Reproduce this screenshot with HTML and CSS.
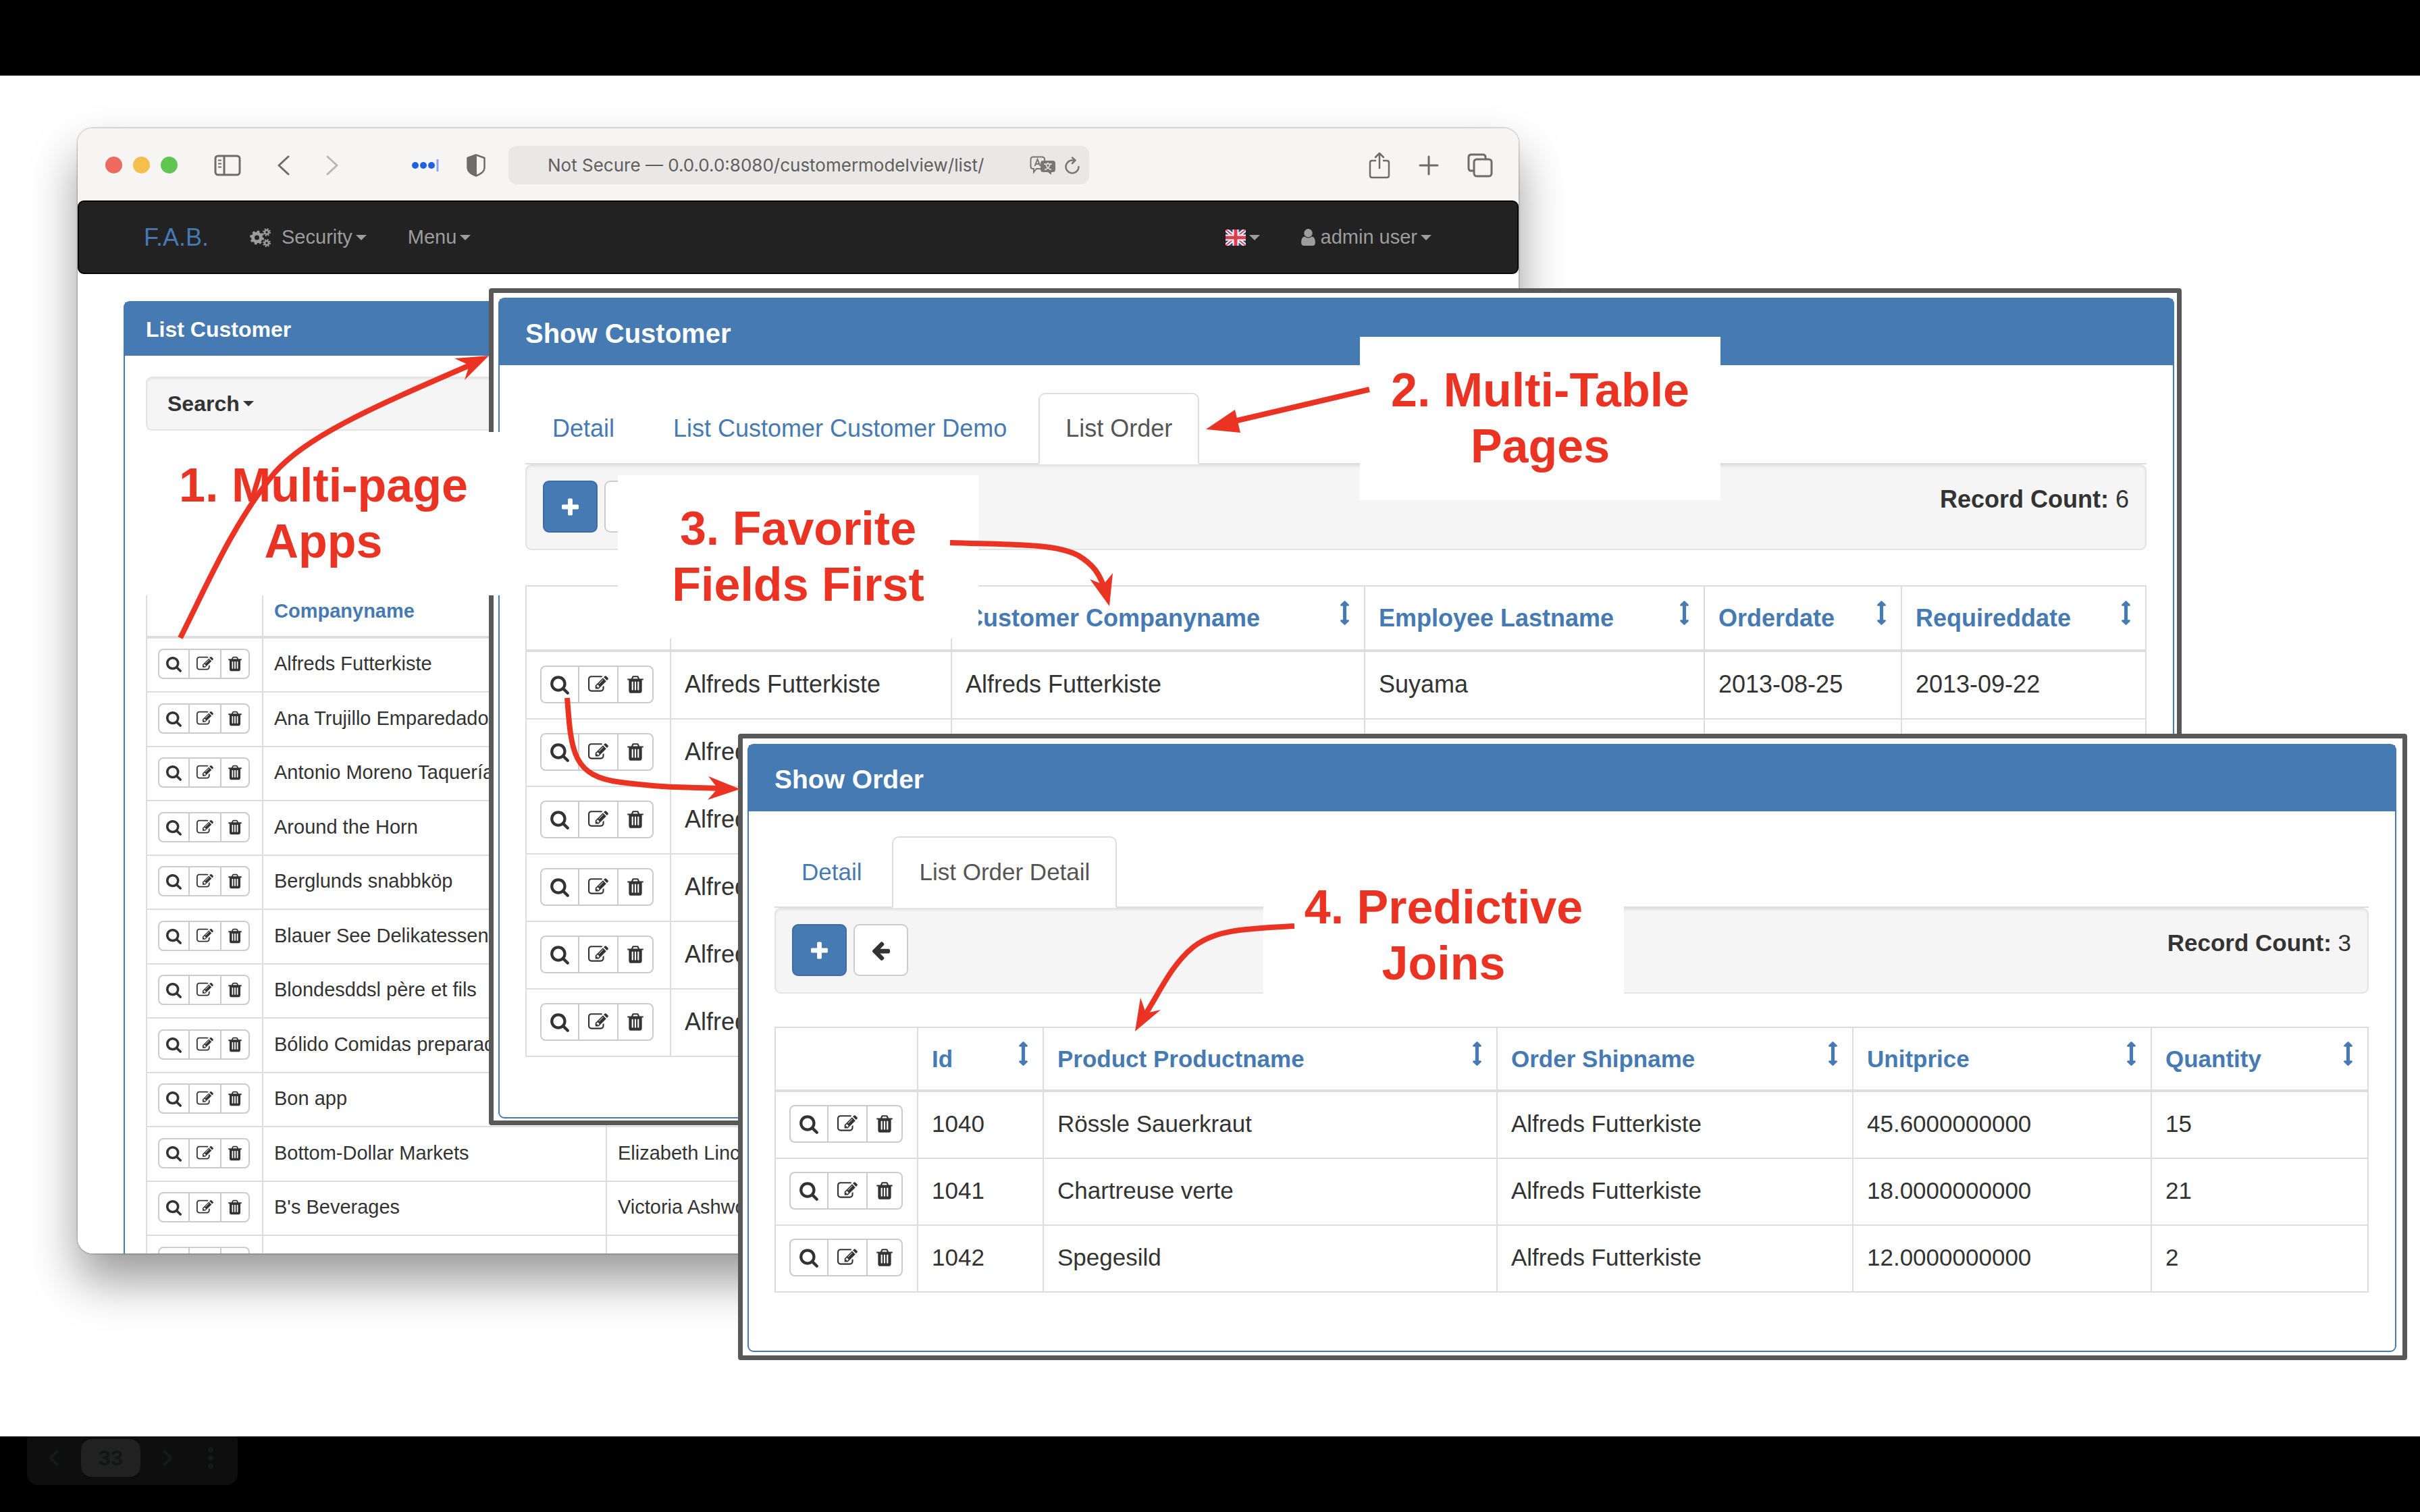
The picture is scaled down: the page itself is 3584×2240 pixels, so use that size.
FILE: index.html
```html
<!DOCTYPE html>
<html lang="en">
<head>
<meta charset="utf-8">
<title>Multi-page apps</title>
<link rel="stylesheet" href="styles.css">
</head>
<body>
<svg class="sprite" aria-hidden="true">
  <symbol id="search" viewBox="0 0 1664 1792"><path d="M1152 832q0-185-131.500-316.500t-316.500-131.500-316.500 131.500-131.500 316.500 131.500 316.500 316.500 131.500 316.500-131.500 131.500-316.500zm512 832q0 52-38 90t-90 38q-54 0-90-38l-343-342q-179 124-399 124-143 0-273.500-55.500t-225-150-150-225-55.500-273.500 55.500-273.500 150-225 225-150 273.500-55.500 273.500 55.500 225 150 150 225 55.500 273.500q0 220-124 399l343 343q37 37 37 90z"/></symbol>
  <symbol id="edit" viewBox="0 0 1792 1792"><path d="M888 1184l116-116-152-152-116 116v56h96v96h56zm440-720q-16-16-33 1l-350 350q-17 17-1 33t33-1l350-350q17-17 1-33zm80 594v190q0 119-84.500 203.500t-203.500 84.500h-832q-119 0-203.500-84.500t-84.500-203.500v-832q0-119 84.500-203.500t203.500-84.500h832q63 0 117 25 15 7 18 23 3 17-9 29l-49 49q-14 14-32 8-23-6-45-6h-832q-66 0-113 47t-47 113v832q0 66 47 113t113 47h832q66 0 113-47t47-113v-126q0-13 9-22l64-64q15-15 35-7t20 29zm-96-738l288 288-672 672h-288v-288zm444 132l-92 92-288-288 92-92q28-28 68-28t68 28l152 152q28 28 28 68t-28 68z"/></symbol>
  <symbol id="trash" viewBox="0 0 1408 1792"><path d="M512 1376v-704q0-14-9-23t-23-9h-64q-14 0-23 9t-9 23v704q0 14 9 23t23 9h64q14 0 23-9t9-23zm256 0v-704q0-14-9-23t-23-9h-64q-14 0-23 9t-9 23v704q0 14 9 23t23 9h64q14 0 23-9t9-23zm256 0v-704q0-14-9-23t-23-9h-64q-14 0-23 9t-9 23v704q0 14 9 23t23 9h64q14 0 23-9t9-23zm-544-992h448l-48-117q-7-9-17-11h-317q-10 2-17 11zm928 32v64q0 14-9 23t-23 9h-96v948q0 83-47 143.500t-113 60.500h-832q-66 0-113-58.500t-47-141.500v-952h-96q-14 0-23-9t-9-23v-64q0-14 9-23t23-9h309l70-167q15-37 54-63t79-26h320q40 0 79 26t54 63l70 167h309q14 0 23 9t9 23z"/></symbol>
  <symbol id="plus" viewBox="0 0 1408 1792"><path d="M1408 800v192q0 40-28 68t-68 28h-416v416q0 40-28 68t-68 28h-192q-40 0-68-28t-28-68v-416h-416q-40 0-68-28t-28-68v-192q0-40 28-68t68-28h416v-416q0-40 28-68t68-28h192q40 0 68 28t28 68v416h416q40 0 68 28t28 68z"/></symbol>
  <symbol id="back" viewBox="0 0 1472 1792"><path d="M1472 896v128q0 53-32.500 90.500t-84.500 37.500h-704l293 294q38 36 38 90t-38 90l-75 76q-37 37-90 37-52 0-91-37l-651-652q-37-37-37-90 0-52 37-91l651-650q38-38 91-38 52 0 90 38l75 74q38 38 38 91t-38 91l-293 293h704q52 0 84.500 37.500t32.500 90.500z"/></symbol>
  <symbol id="sort" viewBox="0 0 640 1792"><path d="M640 320q0 26-19 45t-45 19h-128v1024h128q26 0 45 19t19 45-19 45l-256 256q-19 19-45 19t-45-19l-256-256q-19-19-19-45t19-45 45-19h128v-1024h-128q-26 0-45-19t-19-45 19-45l256-256q19-19 45-19t45 19l256 256q19 19 19 45z"/></symbol>
  <symbol id="user" viewBox="0 0 1280 1792"><path d="M1280 1399q0 109-62.500 187t-150.500 78h-854q-88 0-150.500-78t-62.500-187q0-85 8.500-160.500t31.500-152 58.500-131 94-89 134.500-34.500q131 128 313 128t313-128q76 0 134.500 34.500t94 89 58.500 131 31.500 152 8.500 160.500zm-256-887q0 159-112.500 271.500t-271.500 112.500-271.500-112.500-112.500-271.500 112.500-271.500 271.500-112.500 271.500 112.500 112.500 271.500z"/></symbol>
</svg>

<main class="slide">

  <section class="browser">
    <div class="toolbar">
      <div class="lights"><i class="red"></i><i class="amber"></i><i class="green"></i></div>
      <button class="tool sidebar-tool" aria-label="Sidebar"><svg width="40" height="32" fill="none" stroke="#6d6c6a" stroke-width="3"><rect x="2" y="2" width="36" height="28" rx="4"/><path d="M15 2V30"/><path d="M6 8.500h5M6 13.500h5M6 18.500h5" stroke-width="2"/></svg></button>
      <button class="tool prev-tool" aria-label="Back"><svg width="18" height="30" fill="none" stroke="#6d6c6a" stroke-width="3" stroke-linecap="round" stroke-linejoin="round"><path d="M16 2L2 15L16 28"/></svg></button>
      <button class="tool next-tool" aria-label="Forward"><svg width="18" height="30" fill="none" stroke="#b9b8b6" stroke-width="3" stroke-linecap="round" stroke-linejoin="round"><path d="M2 2L16 15L2 28"/></svg></button>
      <button class="tool pass-tool" aria-label="Passwords"><svg width="40" height="20"><g fill="#2160e0"><circle cx="5" cy="10" r="5"/><circle cx="17" cy="10" r="5"/><circle cx="29" cy="10" r="5"/></g><path d="M38 1V19" stroke="#86a6ee" stroke-width="3"/></svg></button>
      <button class="tool shield-tool" aria-label="Privacy"><svg width="28" height="34"><path d="M14 1.500L26.500 6V21Q26 28 14 32.500Q2 28 1.500 21V6Z" fill="none" stroke="#6d6c6a" stroke-width="2.500" stroke-linejoin="round"/><path d="M15 1.500L1.500 6V21Q2 28 15 32.500Z" fill="#6d6c6a"/></svg></button>
      <div class="address">
        <input class="url" type="text" aria-label="Address" value="Not Secure — 0.0.0.0:8080/customermodelview/list/">
        <button class="tool" aria-label="Translate"><svg width="38" height="28"><path d="M5 1.500H18Q22 1.500 22 5V16Q22 19 18 19H10L6 24V19H5Q1.500 19 1.500 16V5Q1.500 1.500 5 1.500Z" fill="none" stroke="#777674" stroke-width="2"/><path d="M7.500 15L11.500 5L15.500 15M9 12H14" fill="none" stroke="#777674" stroke-width="2"/><path d="M20 7H34Q38 7 38 11V20Q38 24 34 24H32V28L27 24H20Q16 24 16 20V11Q16 7 20 7Z" fill="#777674"/><path d="M21 12H33M27 9.500V12M23.500 12Q26 19 32 20.500M30.500 12Q28 19 22 20.500" fill="none" stroke="#e9e8e6" stroke-width="1.500"/></svg></button>
        <button class="tool" aria-label="Reload"><svg width="22" height="26" fill="none" stroke="#777674" stroke-width="2.500" stroke-linecap="round" stroke-linejoin="round"><path d="M20.500 15A9.500 9.500 0 1 1 11 5.500H15"/><path d="M11 1.500L15.500 5.500L11 10"/></svg></button>
      </div>
      <button class="tool share-tool" aria-label="Share"><svg width="32" height="40" fill="none" stroke="#6d6c6a" stroke-width="2.500" stroke-linecap="round" stroke-linejoin="round"><path d="M10 13H5Q2 13 2 16V35Q2 38 5 38H27Q30 38 30 35V16Q30 13 27 13H22"/><path d="M16 24V2M10 8L16 2L22 8"/></svg></button>
      <button class="tool add-tool" aria-label="New tab"><svg width="30" height="30" stroke="#6d6c6a" stroke-width="3" stroke-linecap="round"><path d="M15 2V28M2 15H28"/></svg></button>
      <button class="tool tabs-tool" aria-label="Tabs"><svg width="38" height="36" fill="none" stroke="#6d6c6a" stroke-width="3"><path d="M10 26H6Q2 26 2 22V6Q2 2 6 2H23Q27 2 27 6V9"/><rect x="10" y="9" width="26" height="25" rx="4"/></svg></button>
    </div>

    <nav class="navbar">
      <a class="brand" href="#">F.A.B.</a>
      <a class="nav-link" href="#"><svg class="cogs" width="31" height="28" fill="none" stroke="#9d9d9d"><circle cx="10.500" cy="14" r="6" stroke-width="5"/><circle cx="10.500" cy="14" r="9" stroke-width="3" stroke-dasharray="3.500 3.570"/><circle cx="25" cy="6" r="3" stroke-width="2.500"/><circle cx="25" cy="6" r="5" stroke-width="2" stroke-dasharray="2 1.930"/><circle cx="25" cy="22" r="3" stroke-width="2.500"/><circle cx="25" cy="22" r="5" stroke-width="2" stroke-dasharray="2 1.930"/></svg>Security<i class="caret"></i></a>
      <a class="nav-link" href="#">Menu<i class="caret"></i></a>
      <a class="nav-link nav-right" href="#" aria-label="Language"><svg width="30" height="24" viewBox="0 0 30 24"><rect width="30" height="24" fill="#2b3990"/><path d="M0 0L30 24M30 0L0 24" stroke="#fff" stroke-width="6"/><path d="M0 0L30 24M30 0L0 24" stroke="#d8434c" stroke-width="2"/><path d="M15 0V24M0 12H30" stroke="#fff" stroke-width="9"/><path d="M15 0V24M0 12H30" stroke="#dc3f4a" stroke-width="5"/></svg><i class="caret"></i></a>
      <a class="nav-link" href="#"><svg class="user"><use href="#user"/></svg>admin user<i class="caret"></i></a>
    </nav>

    <article class="panel list-panel">
      <h2 class="panel-title">List Customer</h2>
      <div class="panel-body">
        <div class="well search-well"><button class="search-toggle">Search<i class="caret"></i></button></div>
        <table class="grid">
          <colgroup><col class="c-act"><col class="c-company"><col></colgroup>
          <thead><tr><th></th><th><a href="#">Companyname</a></th><th></th></tr></thead>
          <tbody>
            <tr><td><div class="acts"><button aria-label="Show"><svg class="i-search"><use href="#search"/></svg></button><button aria-label="Edit"><svg class="i-edit"><use href="#edit"/></svg></button><button aria-label="Delete"><svg class="i-trash"><use href="#trash"/></svg></button></div></td><td>Alfreds Futterkiste</td><td></td></tr>
            <tr><td><div class="acts"><button aria-label="Show"><svg class="i-search"><use href="#search"/></svg></button><button aria-label="Edit"><svg class="i-edit"><use href="#edit"/></svg></button><button aria-label="Delete"><svg class="i-trash"><use href="#trash"/></svg></button></div></td><td>Ana Trujillo Emparedados</td><td></td></tr>
            <tr><td><div class="acts"><button aria-label="Show"><svg class="i-search"><use href="#search"/></svg></button><button aria-label="Edit"><svg class="i-edit"><use href="#edit"/></svg></button><button aria-label="Delete"><svg class="i-trash"><use href="#trash"/></svg></button></div></td><td>Antonio Moreno Taquería</td><td></td></tr>
            <tr><td><div class="acts"><button aria-label="Show"><svg class="i-search"><use href="#search"/></svg></button><button aria-label="Edit"><svg class="i-edit"><use href="#edit"/></svg></button><button aria-label="Delete"><svg class="i-trash"><use href="#trash"/></svg></button></div></td><td>Around the Horn</td><td></td></tr>
            <tr><td><div class="acts"><button aria-label="Show"><svg class="i-search"><use href="#search"/></svg></button><button aria-label="Edit"><svg class="i-edit"><use href="#edit"/></svg></button><button aria-label="Delete"><svg class="i-trash"><use href="#trash"/></svg></button></div></td><td>Berglunds snabbköp</td><td></td></tr>
            <tr><td><div class="acts"><button aria-label="Show"><svg class="i-search"><use href="#search"/></svg></button><button aria-label="Edit"><svg class="i-edit"><use href="#edit"/></svg></button><button aria-label="Delete"><svg class="i-trash"><use href="#trash"/></svg></button></div></td><td>Blauer See Delikatessen</td><td></td></tr>
            <tr><td><div class="acts"><button aria-label="Show"><svg class="i-search"><use href="#search"/></svg></button><button aria-label="Edit"><svg class="i-edit"><use href="#edit"/></svg></button><button aria-label="Delete"><svg class="i-trash"><use href="#trash"/></svg></button></div></td><td>Blondesddsl père et fils</td><td></td></tr>
            <tr><td><div class="acts"><button aria-label="Show"><svg class="i-search"><use href="#search"/></svg></button><button aria-label="Edit"><svg class="i-edit"><use href="#edit"/></svg></button><button aria-label="Delete"><svg class="i-trash"><use href="#trash"/></svg></button></div></td><td>Bólido Comidas preparadas</td><td></td></tr>
            <tr><td><div class="acts"><button aria-label="Show"><svg class="i-search"><use href="#search"/></svg></button><button aria-label="Edit"><svg class="i-edit"><use href="#edit"/></svg></button><button aria-label="Delete"><svg class="i-trash"><use href="#trash"/></svg></button></div></td><td>Bon app</td><td></td></tr>
            <tr><td><div class="acts"><button aria-label="Show"><svg class="i-search"><use href="#search"/></svg></button><button aria-label="Edit"><svg class="i-edit"><use href="#edit"/></svg></button><button aria-label="Delete"><svg class="i-trash"><use href="#trash"/></svg></button></div></td><td>Bottom-Dollar Markets</td><td>Elizabeth Lincoln</td></tr>
            <tr><td><div class="acts"><button aria-label="Show"><svg class="i-search"><use href="#search"/></svg></button><button aria-label="Edit"><svg class="i-edit"><use href="#edit"/></svg></button><button aria-label="Delete"><svg class="i-trash"><use href="#trash"/></svg></button></div></td><td>B's Beverages</td><td>Victoria Ashworth</td></tr>
            <tr><td><div class="acts"><button aria-label="Show"><svg class="i-search"><use href="#search"/></svg></button><button aria-label="Edit"><svg class="i-edit"><use href="#edit"/></svg></button><button aria-label="Delete"><svg class="i-trash"><use href="#trash"/></svg></button></div></td><td></td><td></td></tr>
          </tbody>
        </table>
      </div>
    </article>
  </section>

  <section class="frame customer">
    <article class="panel">
      <h2 class="panel-title">Show Customer</h2>
      <div class="panel-body">
        <nav class="tabs"><a class="tab" href="#">Detail</a><a class="tab" href="#">List Customer Customer Demo</a><a class="tab active" href="#">List Order</a></nav>
        <div class="well bar"><button class="btn primary" aria-label="Add"><svg class="i-plus"><use href="#plus"/></svg></button><button class="btn" aria-label="Back"><svg class="i-back"><use href="#back"/></svg></button><p class="count"><b>Record Count:</b> 6</p></div>
        <table class="grid">
          <colgroup><col class="c-act"><col class="c-name"><col class="c-company"><col class="c-employee"><col class="c-date"><col></colgroup>
          <thead><tr>
            <th></th><th></th>
            <th><a class="sort" href="#">Customer Companyname<svg><use href="#sort"/></svg></a></th>
            <th><a class="sort" href="#">Employee Lastname<svg><use href="#sort"/></svg></a></th>
            <th><a class="sort" href="#">Orderdate<svg><use href="#sort"/></svg></a></th>
            <th><a class="sort" href="#">Requireddate<svg><use href="#sort"/></svg></a></th>
          </tr></thead>
          <tbody>
            <tr><td><div class="acts"><button aria-label="Show"><svg class="i-search"><use href="#search"/></svg></button><button aria-label="Edit"><svg class="i-edit"><use href="#edit"/></svg></button><button aria-label="Delete"><svg class="i-trash"><use href="#trash"/></svg></button></div></td><td>Alfreds Futterkiste</td><td>Alfreds Futterkiste</td><td>Suyama</td><td>2013-08-25</td><td>2013-09-22</td></tr>
            <tr><td><div class="acts"><button aria-label="Show"><svg class="i-search"><use href="#search"/></svg></button><button aria-label="Edit"><svg class="i-edit"><use href="#edit"/></svg></button><button aria-label="Delete"><svg class="i-trash"><use href="#trash"/></svg></button></div></td><td>Alfreds Futterkiste</td><td></td><td></td><td></td><td></td></tr>
            <tr><td><div class="acts"><button aria-label="Show"><svg class="i-search"><use href="#search"/></svg></button><button aria-label="Edit"><svg class="i-edit"><use href="#edit"/></svg></button><button aria-label="Delete"><svg class="i-trash"><use href="#trash"/></svg></button></div></td><td>Alfreds Futterkiste</td><td></td><td></td><td></td><td></td></tr>
            <tr><td><div class="acts"><button aria-label="Show"><svg class="i-search"><use href="#search"/></svg></button><button aria-label="Edit"><svg class="i-edit"><use href="#edit"/></svg></button><button aria-label="Delete"><svg class="i-trash"><use href="#trash"/></svg></button></div></td><td>Alfreds Futterkiste</td><td></td><td></td><td></td><td></td></tr>
            <tr><td><div class="acts"><button aria-label="Show"><svg class="i-search"><use href="#search"/></svg></button><button aria-label="Edit"><svg class="i-edit"><use href="#edit"/></svg></button><button aria-label="Delete"><svg class="i-trash"><use href="#trash"/></svg></button></div></td><td>Alfreds Futterkiste</td><td></td><td></td><td></td><td></td></tr>
            <tr><td><div class="acts"><button aria-label="Show"><svg class="i-search"><use href="#search"/></svg></button><button aria-label="Edit"><svg class="i-edit"><use href="#edit"/></svg></button><button aria-label="Delete"><svg class="i-trash"><use href="#trash"/></svg></button></div></td><td>Alfreds Futterkiste</td><td></td><td></td><td></td><td></td></tr>
          </tbody>
        </table>
      </div>
    </article>
  </section>

  <section class="frame order">
    <article class="panel">
      <h2 class="panel-title">Show Order</h2>
      <div class="panel-body">
        <nav class="tabs"><a class="tab" href="#">Detail</a><a class="tab active" href="#">List Order Detail</a></nav>
        <div class="well bar"><button class="btn primary" aria-label="Add"><svg class="i-plus"><use href="#plus"/></svg></button><button class="btn" aria-label="Back"><svg class="i-back"><use href="#back"/></svg></button><p class="count"><b>Record Count:</b> 3</p></div>
        <table class="grid">
          <colgroup><col class="c-act"><col class="c-id"><col class="c-product"><col class="c-ship"><col class="c-price"><col></colgroup>
          <thead><tr>
            <th></th>
            <th><a class="sort" href="#">Id<svg><use href="#sort"/></svg></a></th>
            <th><a class="sort" href="#">Product Productname<svg><use href="#sort"/></svg></a></th>
            <th><a class="sort" href="#">Order Shipname<svg><use href="#sort"/></svg></a></th>
            <th><a class="sort" href="#">Unitprice<svg><use href="#sort"/></svg></a></th>
            <th><a class="sort" href="#">Quantity<svg><use href="#sort"/></svg></a></th>
          </tr></thead>
          <tbody>
            <tr><td><div class="acts"><button aria-label="Show"><svg class="i-search"><use href="#search"/></svg></button><button aria-label="Edit"><svg class="i-edit"><use href="#edit"/></svg></button><button aria-label="Delete"><svg class="i-trash"><use href="#trash"/></svg></button></div></td><td>1040</td><td>Rössle Sauerkraut</td><td>Alfreds Futterkiste</td><td>45.6000000000</td><td>15</td></tr>
            <tr><td><div class="acts"><button aria-label="Show"><svg class="i-search"><use href="#search"/></svg></button><button aria-label="Edit"><svg class="i-edit"><use href="#edit"/></svg></button><button aria-label="Delete"><svg class="i-trash"><use href="#trash"/></svg></button></div></td><td>1041</td><td>Chartreuse verte</td><td>Alfreds Futterkiste</td><td>18.0000000000</td><td>21</td></tr>
            <tr><td><div class="acts"><button aria-label="Show"><svg class="i-search"><use href="#search"/></svg></button><button aria-label="Edit"><svg class="i-edit"><use href="#edit"/></svg></button><button aria-label="Delete"><svg class="i-trash"><use href="#trash"/></svg></button></div></td><td>1042</td><td>Spegesild</td><td>Alfreds Futterkiste</td><td>12.0000000000</td><td>2</td></tr>
          </tbody>
        </table>
      </div>
    </article>
  </section>

  <p class="note note-1">1. Multi-page<br>Apps</p>
  <p class="note note-2">2. Multi-Table<br>Pages</p>
  <p class="note note-3">3. Favorite<br>Fields First</p>
  <p class="note note-4">4. Predictive<br>Joins</p>

  <svg class="arrows" aria-hidden="true">
    <g transform="translate(0 -112)">
      <g fill="none" stroke="#ea3323" stroke-width="8">
        <path d="M267 945C305 870 345 775 407 700C455 645 560 600 696 541"/>
        <path d="M840 1034C846 1115 848 1150 920 1159S1020 1166 1066 1168"/>
        <path d="M2028 577L1828 624"/>
        <path d="M1407 804C1500 807 1565 805 1597 823C1620 837 1628 850 1636 872"/>
        <path d="M1917 1372C1840 1376 1797 1378 1766 1404S1720 1465 1695 1505"/>
      </g>
      <g fill="#ea3323">
        <path d="M724 527L673 531L695 541L688 563Z"/>
        <path d="M1096 1169L1049 1150L1063 1168L1048 1185Z"/>
        <path d="M1786 636L1829 607L1837 641Z"/>
        <path d="M1643 898L1614 858L1634 866L1648 849Z"/>
        <path d="M1681 1528L1689 1478L1697 1501L1719 1496Z"/>
      </g>
    </g>
  </svg>

  <div class="presenter">
    <button aria-label="Previous slide"><svg width="16" height="24" fill="none" stroke="#161919" stroke-width="4"><path d="M14 1L3 12L14 23"/></svg></button>
    <button class="page-no">33</button>
    <button aria-label="Next slide"><svg width="16" height="24" fill="none" stroke="#161919" stroke-width="4"><path d="M2 1L13 12L2 23"/></svg></button>
    <button aria-label="More"><svg width="8" height="32" fill="#161919"><circle cx="4" cy="4" r="4"/><circle cx="4" cy="16" r="4"/><circle cx="4" cy="28" r="4"/></svg></button>
  </div>
</main>
</body>
</html>
```
FILE: styles.css
```css
* { box-sizing: border-box; }

body {
  margin: 0;
  padding: 112px 0;
  background: #000;
  font-family: "Liberation Sans", Arial, sans-serif;
  color: #333;
}

button, input {
  margin: 0;
  padding: 0;
  border: 0;
  background: none;
  font: inherit;
  color: inherit;
}

a { color: #467ab3; text-decoration: none; }
svg { display: block; flex: none; }
.sprite { position: absolute; width: 0; height: 0; }

.slide {
  position: relative;
  min-height: calc(100vh - 224px);
  background: #fff;
}

/* Browser window */
.browser {
  --text: 29px;
  --title: 32px;
  --icon: 25px;
  --cell-pad: 16px;
  --act-pad: 10px;
  --act-height: 45px;
  position: absolute;
  left: 115px;
  top: 78px;
  width: 2134px;
  height: 1667px;
  overflow: hidden;
  border-radius: 22px;
  background: #fff;
}

.slide::before {
  content: "";
  position: absolute;
  left: 115px;
  top: 78px;
  width: 2134px;
  height: 1667px;
  border-radius: 22px;
  box-shadow: 0 0 2px 1px rgba(0, 0, 0, .25), 0 40px 70px rgba(0, 0, 0, .4);
}

.toolbar {
  display: flex;
  align-items: center;
  height: 107px;
  padding: 2px 38px 0 41px;
  background: #f6f5f3;
}

.lights { display: flex; gap: 16px; }
.lights i { width: 25px; height: 25px; border-radius: 50%; }
.red { background: #ec6a5e; }
.amber { background: #f4bf4f; }
.green { background: #61c554; }

.sidebar-tool { margin-left: 54px; }
.prev-tool { margin-left: 54px; }
.next-tool { margin-left: 54px; }
.pass-tool { margin-left: 109px; }
.shield-tool { margin-left: 41px; }

.address {
  display: flex;
  align-items: center;
  gap: 14px;
  width: 860px;
  height: 57px;
  margin-left: 34px;
  padding: 0 14px 0 58px;
  border-radius: 12px;
  background: #e9e8e6;
}

.url {
  flex: 1;
  min-width: 0;
  font-family: Inter, sans-serif;
  font-size: 26px;
  line-height: 40px;
  color: #5f5e5c;
}

.share-tool { margin-left: auto; }
.add-tool { margin-left: 42px; }
.tabs-tool { margin-left: 42px; }

.navbar {
  display: flex;
  align-items: center;
  gap: 61px;
  height: 109px;
  padding: 0 127px 0 96px;
  border: 2px solid #080808;
  border-radius: 9px;
  background: #222;
  font-size: var(--text);
}

.brand { font-size: 36px; }
.nav-link { display: flex; align-items: center; color: #9d9d9d; }
.nav-right { margin-left: auto; }
.cogs { margin-right: 16px; }
.user { width: 21px; height: 29px; margin-right: 8px; fill: #9d9d9d; }

.caret {
  margin-left: 5px;
  border: 8px solid transparent;
  border-top-color: currentColor;
  border-bottom: 0;
}

/* Panels */
.panel {
  border: 2px solid #467ab3;
  border-radius: 9px;
  background: #fff;
}

.panel-title {
  display: flex;
  align-items: center;
  margin: 0;
  padding-top: 4px;
  background: #467ab3;
  color: #fff;
  font-size: var(--title);
}

.well {
  border: 2px solid #e3e3e3;
  border-radius: 9px;
  background: #f5f5f5;
  box-shadow: inset 0 2px 3px rgba(0, 0, 0, .05);
}

.list-panel { margin: 40px 68px 0; }
.list-panel .panel-title { height: 79px; padding: 2px 0 0 31px; }
.list-panel .panel-body { padding: 31px; }
.search-well { display: flex; height: 80px; padding-left: 30px; }
.search-toggle { display: flex; align-items: center; font-size: var(--title); font-weight: bold; }

.frame {
  --text: 36px;
  --icon: 30px;
  --cell-pad: 20px;
  --act-pad: 13px;
  --act-height: 56px;
  position: absolute;
  border: 7px solid #595959;
  border-radius: 4px;
  background: #fff;
}

.frame .panel { height: 100%; }

.customer {
  --title: 40px;
  --tab: 36px;
  --tab-gap: 7px;
  --body-top: 41px;
  left: 724px;
  top: 315px;
  width: 2507px;
  height: 1240px;
  padding: 7px 4px 3px 7px;
}

.order {
  --text: 35px;
  --title: 39px;
  --tab: 35px;
  --tab-gap: 5px;
  --body-top: 37px;
  left: 1093px;
  top: 975px;
  width: 2472px;
  height: 928px;
  padding: 8px 9px 5px 7px;
}

.frame .panel-title { height: 98px; padding-left: 38px; }
.frame .panel-body { padding: var(--body-top) 39px 0 38px; }

.tabs {
  display: flex;
  gap: var(--tab-gap);
  height: 106px;
  border-bottom: 2px solid #ddd;
  font-size: var(--tab);
}

.tab {
  display: flex;
  align-items: center;
  height: 106px;
  padding: 0 38px;
  border: 2px solid transparent;
  border-radius: 10px 10px 0 0;
}

.tab.active {
  border-color: #ddd #ddd #fff;
  background: #fff;
  color: #555;
}

.bar {
  display: flex;
  gap: 10px;
  height: 127px;
  padding: 22px 24px;
}

.btn {
  display: flex;
  align-items: center;
  justify-content: center;
  width: 81px;
  height: 77px;
  border: 2px solid #ccc;
  border-radius: 9px;
  background: #fff;
}

.btn svg { height: 32px; fill: #333; }
.primary { border-color: #3e6da4; background: #467ab3; }
.primary svg { fill: #fff; }
.i-plus { width: 25px; }
.i-back { width: 26px; }

.count {
  margin: 2px 0 0 auto;
  font-size: var(--text);
  line-height: 52px;
}

/* Data tables */
.grid {
  width: 100%;
  table-layout: fixed;
  border-collapse: separate;
  border-spacing: 0;
  border: solid #ddd;
  border-width: 2px 0 0 2px;
  font-size: var(--text);
}

.grid th, .grid td {
  padding: 0 0 3px var(--cell-pad);
  border: solid #ddd;
  border-width: 0 2px 2px 0;
  text-align: left;
  vertical-align: middle;
  white-space: nowrap;
}

.grid th { padding-bottom: 0; border-bottom-width: 4px; }

.sort {
  display: flex;
  align-items: flex-start;
  justify-content: space-between;
  padding-right: 22px;
  line-height: 52px;
}

.sort svg { width: 13px; height: 36px; fill: #467ab3; }

.list-panel .grid { margin-top: 229px; }
.list-panel .c-act { width: 172px; }
.list-panel .c-company { width: 509px; }
.list-panel th { height: 77px; }
.list-panel td { height: 80px; }
.list-panel tr:nth-child(even) td { height: 81px; }

.customer .grid { margin-top: 52px; }
.customer .c-act { width: 214px; }
.customer .c-name { width: 416px; }
.customer .c-company { width: 612px; }
.customer .c-employee { width: 503px; }
.customer .c-date { width: 292px; }
.customer th { height: 97px; }
.customer td { height: 100px; }

.order .grid { margin-top: 49px; }
.order .c-act { width: 211px; }
.order .c-id { width: 186px; }
.order .c-product { width: 672px; }
.order .c-ship { width: 527px; }
.order .c-price { width: 442px; }
.order th { height: 95px; }
.order td { height: 99px; }

.acts { display: flex; }

.acts button {
  display: flex;
  align-items: center;
  height: var(--act-height);
  padding: 0 var(--act-pad);
  border: 2px solid #ccc;
  background: #fff;
}

.acts button + button { margin-left: -2px; }
.acts button:first-child { border-radius: 8px 0 0 8px; }
.acts button:last-child { border-radius: 0 8px 8px 0; }
.acts svg { height: var(--icon); fill: #333; }
.i-search { width: 28px; }
.i-edit { width: 30px; }
.i-trash { width: 24px; }
.browser .i-search { width: 23px; }
.browser .i-edit { width: 25px; }
.browser .i-trash { width: 20px; }

/* Annotations */
.note {
  position: absolute;
  width: 534px;
  height: 242px;
  margin: 0;
  padding-top: 38px;
  background: #fff;
  color: #ea3323;
  font-size: 70px;
  font-weight: bold;
  line-height: 83px;
  text-align: center;
}

.note-1 { left: 212px; top: 528px; }
.note-2 { left: 2014px; top: 387px; }
.note-3 { left: 915px; top: 592px; }
.note-4 { left: 1871px; top: 1153px; }

.arrows {
  position: absolute;
  left: 0;
  top: 0;
  width: 100%;
  height: 100%;
  pointer-events: none;
}

/* Slide controls */
.presenter {
  position: absolute;
  left: 40px;
  bottom: -72px;
  display: flex;
  align-items: center;
  gap: 32px;
  height: 84px;
  padding: 4px 36px 0 32px;
  border-radius: 16px;
  background: rgba(255, 255, 255, .055);
}

.page-no {
  width: 88px;
  height: 56px;
  border-radius: 16px;
  background: #212121;
  color: #131616;
  font-family: Roboto, sans-serif;
  font-size: 32px;
  font-weight: bold;
}

.presenter button:last-child { margin-left: 20px; }
```
